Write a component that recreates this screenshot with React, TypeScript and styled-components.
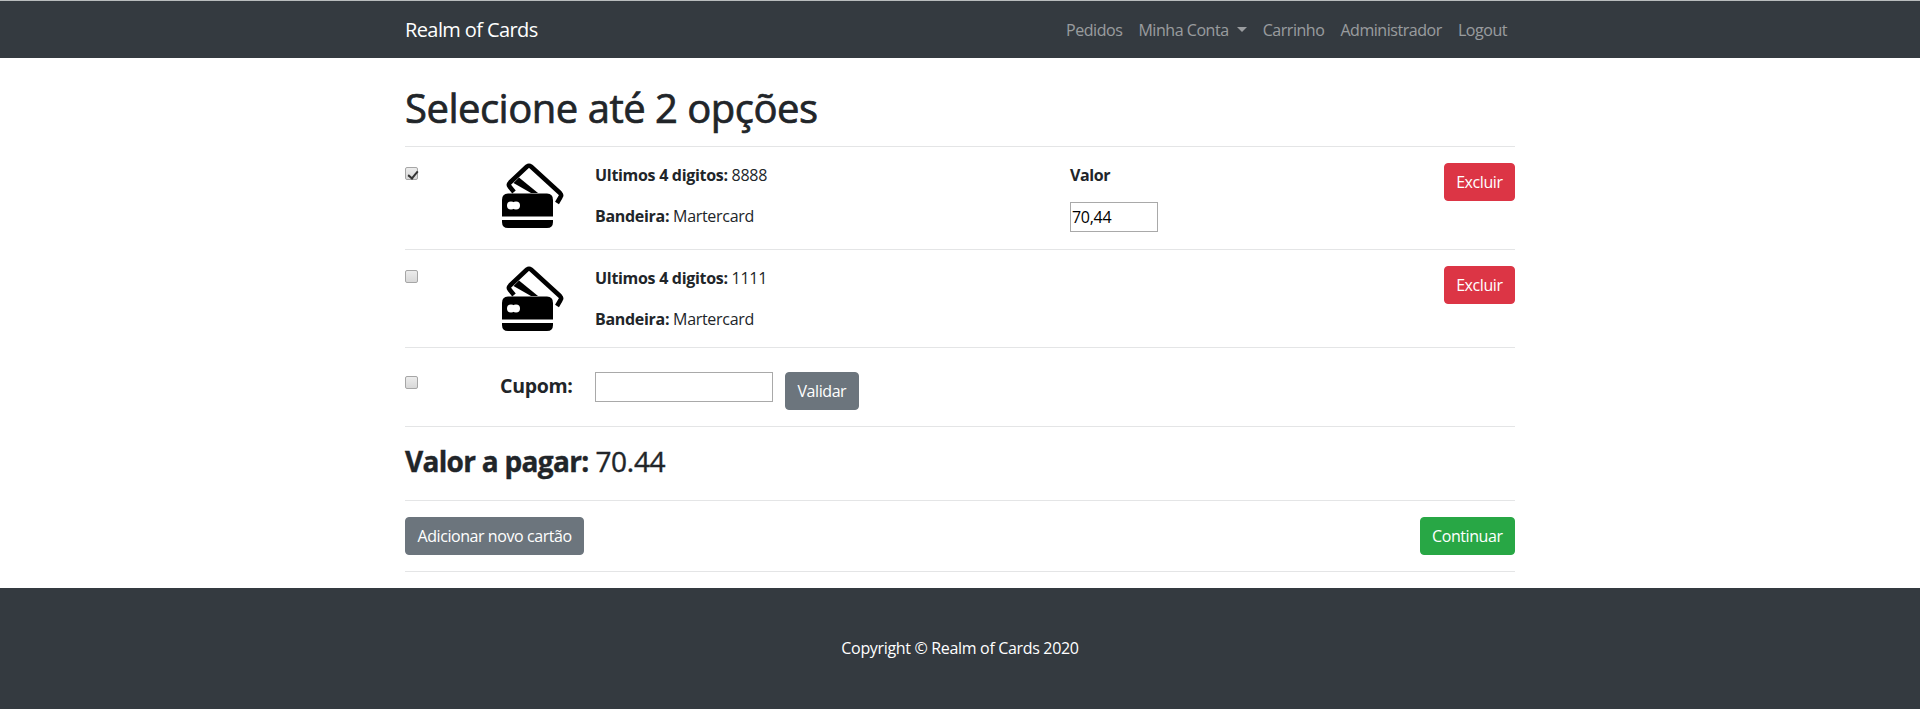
import styled, { createGlobalStyle } from "styled-components";

const GlobalStyle = createGlobalStyle`
  body {
    margin: 0;
    background: #fff;
    font-family: "Open Sans", "Noto Sans", sans-serif;
    font-size: 16px;
    line-height: 24px;
    color: #212529;
  }
  * { box-sizing: border-box; }
`;

const Page = styled.div`
  height: 710px;
  overflow: hidden;
  display: flex;
  flex-direction: column;
`;

const Navbar = styled.nav`
  height: 58px;
  background: #343a40;
  border-top: 1px solid #b9bcbd;
  flex-shrink: 0;
`;

const NavInner = styled.div`
  width: 1110px;
  height: 100%;
  margin: 0 auto;
  display: flex;
  align-items: center;
  justify-content: space-between;
`;

const Brand = styled.span`
  font-size: 20px;
  letter-spacing: -0.6px;
  color: #fff;
`;

const NavList = styled.div`
  display: flex;
  padding-right: 8px;
  gap: 16px;
`;

const NavLink = styled.span`
  font-size: 16px;
  letter-spacing: -0.45px;
  color: rgba(255, 255, 255, 0.5);
  display: flex;
  align-items: center;
`;

const Caret = styled.i`
  display: inline-block;
  margin-left: 8px;
  border-top: 5px solid rgba(255, 255, 255, 0.5);
  border-left: 5px solid transparent;
  border-right: 5px solid transparent;
`;

const Main = styled.main`
  width: 1110px;
  margin: 0 auto;
  flex: 1;
`;

const Title = styled.h1`
  margin: 0;
  height: 88px;
  padding-top: 26px;
  font-size: 40px;
  line-height: 48px;
  font-weight: 400;
  letter-spacing: -0.5px;
  -webkit-text-stroke: 0.7px #212529;
`;

const Row = styled.div<{ $height: number; $top?: number }>`
  height: ${(p) => p.$height}px;
  border-top: 1px solid #e4e5e6;
  padding-top: ${(p) => p.$top ?? 16}px;
  display: flex;
  align-items: flex-start;
`;

const CheckCell = styled.div`
  width: 95px;
  flex-shrink: 0;
`;

const Check = styled.input`
  appearance: none;
  position: relative;
  display: block;
  width: 13px;
  height: 13px;
  margin: 4px 0 0;
  border: 1px solid #a6a6a6;
  border-radius: 2px;
  background: linear-gradient(#ececec, #d8d8d8);

  &:checked::after {
    content: "";
    position: absolute;
    left: 3.5px;
    top: 0.5px;
    width: 4px;
    height: 8px;
    border: solid #333;
    border-width: 0 2px 2px 0;
    transform: rotate(40deg);
  }
`;

const IconCell = styled.div`
  width: 95px;
  flex-shrink: 0;
`;

const InfoCell = styled.div`
  width: 475px;
  flex-shrink: 0;
`;

const Line = styled.p`
  margin: 0 0 17px;
  font-size: 16px;
  letter-spacing: -0.3px;
  strong { font-weight: 700; }
`;

const ValueCell = styled.div`
  flex: 1;
`;

const ValueLabel = styled.label`
  display: block;
  font-size: 16px;
  font-weight: 700;
  letter-spacing: -0.4px;
  margin-bottom: 15px;
`;

const TextBox = styled.input<{ $width: number }>`
  display: block;
  width: ${(p) => p.$width}px;
  height: 30px;
  border: 1px solid #a9a9a9;
  padding: 1px;
  font-family: "Open Sans", sans-serif;
  font-size: 16px;
  letter-spacing: -0.3px;
  color: #000;
  outline: none;
`;

const Button = styled.button<{ $color: string }>`
  height: 38px;
  padding: 0 11.5px;
  border: 1px solid ${(p) => p.$color};
  border-radius: 4px;
  background: ${(p) => p.$color};
  color: #fff;
  font-family: inherit;
  font-size: 16px;
  letter-spacing: -0.43px;
`;

const CouponLabel = styled.span`
  display: block;
  font-size: 19.5px;
  font-weight: 700;
  letter-spacing: -0.3px;
  margin-top: 2px;
`;

const CouponForm = styled.div`
  display: flex;
  gap: 12px;
  align-items: flex-start;
`;

const Total = styled.h4`
  margin: 0;
  font-size: 28px;
  line-height: 36px;
  font-weight: 400;
  letter-spacing: -0.3px;
  -webkit-text-stroke: 0.4px #212529;
  strong { font-weight: 700; letter-spacing: -0.7px; }
`;

const Actions = styled.div`
  flex: 1;
  display: flex;
  justify-content: space-between;
`;

const Footer = styled.footer`
  height: 121px;
  padding-bottom: 2px;
  background: #343a40;
  color: #fff;
  display: flex;
  align-items: center;
  justify-content: center;
  font-size: 16px;
  letter-spacing: -0.33px;
  flex-shrink: 0;
`;

const Rest = styled.div`
  flex: 1;
  background: #fff;
`;

const IconSvg = styled.svg`
  display: block;
  margin-left: 2px;
`;

const CardsIcon = () => (
  <IconSvg width="62" height="65" viewBox="0 0 62 65">
    <path
      d="M12 29 L7.500 23.500 Q6 21.500 8 19.500 L25 3.500 Q27 2 29 3.500 L58 30 Q60 32 58.500 34 L55 40"
      fill="none"
      stroke="#000"
      strokeWidth="4.500"
      strokeLinejoin="round"
    />
    <path d="M11.500 20 L17 14.500 L36 30 L29 30 Z" fill="#000" />
    <path d="M0 37 Q0 30.500 6 30.500 H45 Q51 30.500 51 37 V53.500 H0 Z" fill="#000" />
    <path d="M0 57 H51 V59 Q51 65 45 65 H6 Q0 65 0 59 Z" fill="#000" />
    <circle cx="9" cy="42.500" r="4" fill="#fff" />
    <circle cx="14" cy="42.500" r="4" fill="#fff" />
  </IconSvg>
);

export default function App() {
  return (
    <Page>
      <GlobalStyle />
      <Navbar>
        <NavInner>
          <Brand>Realm of Cards</Brand>
          <NavList>
            <NavLink>Pedidos</NavLink>
            <NavLink>
              Minha Conta
              <Caret />
            </NavLink>
            <NavLink>Carrinho</NavLink>
            <NavLink>Administrador</NavLink>
            <NavLink>Logout</NavLink>
          </NavList>
        </NavInner>
      </Navbar>
      <Main>
        <Title>Selecione até 2 opções</Title>
        <Row $height={103}>
          <CheckCell>
            <Check type="checkbox" defaultChecked />
          </CheckCell>
          <IconCell>
            <CardsIcon />
          </IconCell>
          <InfoCell>
            <Line>
              <strong>Ultimos 4 digitos:</strong> 8888
            </Line>
            <Line>
              <strong>Bandeira:</strong> Martercard
            </Line>
          </InfoCell>
          <ValueCell>
            <ValueLabel>Valor</ValueLabel>
            <TextBox $width={88} defaultValue="70,44" />
          </ValueCell>
          <Button $color="#dc3545">Excluir</Button>
        </Row>
        <Row $height={98}>
          <CheckCell>
            <Check type="checkbox" />
          </CheckCell>
          <IconCell>
            <CardsIcon />
          </IconCell>
          <InfoCell>
            <Line>
              <strong>Ultimos 4 digitos:</strong> 1111
            </Line>
            <Line>
              <strong>Bandeira:</strong> Martercard
            </Line>
          </InfoCell>
          <ValueCell />
          <Button $color="#dc3545">Excluir</Button>
        </Row>
        <Row $height={79} $top={24}>
          <CheckCell>
            <Check type="checkbox" />
          </CheckCell>
          <IconCell>
            <CouponLabel>Cupom:</CouponLabel>
          </IconCell>
          <CouponForm>
            <TextBox $width={178} />
            <Button $color="#6c757d">Validar</Button>
          </CouponForm>
        </Row>
        <Row $height={74}>
          <Total>
            <strong>Valor a pagar:</strong> 70.44
          </Total>
        </Row>
        <Row $height={71}>
          <Actions>
            <Button $color="#6c757d">Adicionar novo cartão</Button>
            <Button $color="#28a745">Continuar</Button>
          </Actions>
        </Row>
        <Row $height={16} />
      </Main>
      <Footer>Copyright © Realm of Cards 2020</Footer>
      <Rest />
    </Page>
  );
}
